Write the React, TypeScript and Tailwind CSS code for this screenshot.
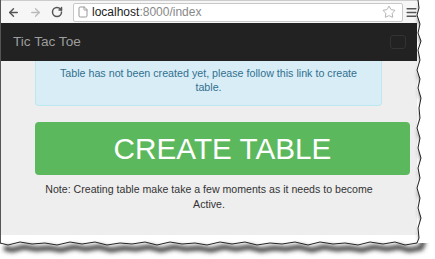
import React from 'react';
import { ArrowLeft, ArrowRight, RotateCw, File, Star, Menu } from 'lucide-react';

// jagged "torn paper" edge along the right and bottom of the window
const rightEdge =
  'M418,0 L419,8 L417,15 L420,24 L418,33 L421,41 L418,50 L420,60 L417,70 L420,79 L418,88 L421,98 L419,108 L420,118 L417,128 L420,138 L418,148 L421,158 L418,168 L420,178 L417,188 L420,198 L418,208 L421,218 L418,228 L419,238 L417,243';
const bottomEdge =
  'M417,243 L405,245 L395,242 L383,244 L370,242 L358,245 L345,243 L333,244 L320,242 L308,245 L295,242 L282,244 L270,243 L257,245 L245,242 L232,244 L220,242 L207,245 L195,243 L182,244 L170,242 L157,245 L145,242 L132,244 L120,243 L107,245 L95,242 L82,244 L70,242 L57,245 L45,243 L32,244 L20,242 L8,245 L0,243';

export default function App() {
  return (
    <div className="relative w-[435px] h-[259px] bg-white overflow-hidden" style={{ fontFamily: '"Liberation Sans", Arial, sans-serif' }}>
      <div className="w-[418px] h-[243px] border-l border-[#555] flex flex-col bg-white">
        {/* browser chrome */}
        <div className="h-[23px] flex items-center bg-[#f6f6f6] border-t border-[#ccc]">
          <div className="flex items-center gap-[9px] pl-[6px] w-[72px]">
            <ArrowLeft size={13} strokeWidth={2.6} className="text-[#555]" />
            <ArrowRight size={13} strokeWidth={2.4} className="text-[#bbb]" />
            <RotateCw size={12} strokeWidth={3} className="text-[#555]" />
          </div>
          <div className="h-[19px] w-[330px] flex items-center bg-white border border-[#c8c8c8] rounded-[2px] pl-[3px] text-[12px]">
            <File size={12} className="text-[#999] mr-[3px]" />
            <span className="text-[#222]">localhost</span>
            <span className="text-[#888]">:8000/index</span>
            <Star size={14} strokeWidth={1.3} className="text-[#999] ml-auto mr-[6px]" />
          </div>
          <Menu size={13} strokeWidth={2.8} className="text-[#555] ml-[2px]" />
        </div>

        {/* navbar */}
        <div className="h-[38px] w-[416px] bg-[#222] flex items-center justify-between px-[12px]">
          <span className="text-[13.6px] text-[#9d9d9d]">Tic Tac Toe</span>
          <div className="w-[16px] h-[14px] border border-[#333] rounded-[3px] mr-[-1px] mb-[1px]" />
        </div>

        {/* content */}
        <div className="w-[416px] h-[174px] bg-[#eee] flex flex-col">
          <div className="mx-[34px] w-[347px] h-[45px] bg-[#d9edf7] border border-t-0 border-[#bce8f1] rounded-b-[4px] text-[#31708f] text-[10.7px] leading-[14px] text-center pt-[5px] px-[20px]">
            Table has not been created yet, please follow this link to create table.
          </div>
          <div className="ml-[34px] mt-[16px] w-[375px] h-[53px] bg-[#5cb85c] rounded-[4px] flex items-center justify-center text-white text-[29.7px] leading-none">
            CREATE TABLE
          </div>
          <p className="w-full mt-[7px] text-center text-[#333] text-[10.6px] leading-[14.5px] px-[40px]">
            Note: Creating table make take a few moments as it needs to become Active.
          </p>
        </div>
      </div>

      {/* torn edge drawing */}
      <svg className="absolute inset-0" width="435" height="259" viewBox="0 0 435 259">
        <defs>
          <filter id="blur" x="-10%" y="-10%" width="120%" height="120%">
            <feGaussianBlur stdDeviation="2" />
          </filter>
        </defs>
        <path d={rightEdge + ' ' + bottomEdge.replace('M', 'L')} transform="translate(4,5)" fill="none" stroke="#444" strokeWidth="5" filter="url(#blur)" />
        <path d={rightEdge + ' L435,243 L435,0 Z'} fill="#fff" />
        <path d={rightEdge + ' ' + bottomEdge.replace('M', 'L')} fill="none" stroke="#222" strokeWidth="1" />
      </svg>
    </div>
  );
}
